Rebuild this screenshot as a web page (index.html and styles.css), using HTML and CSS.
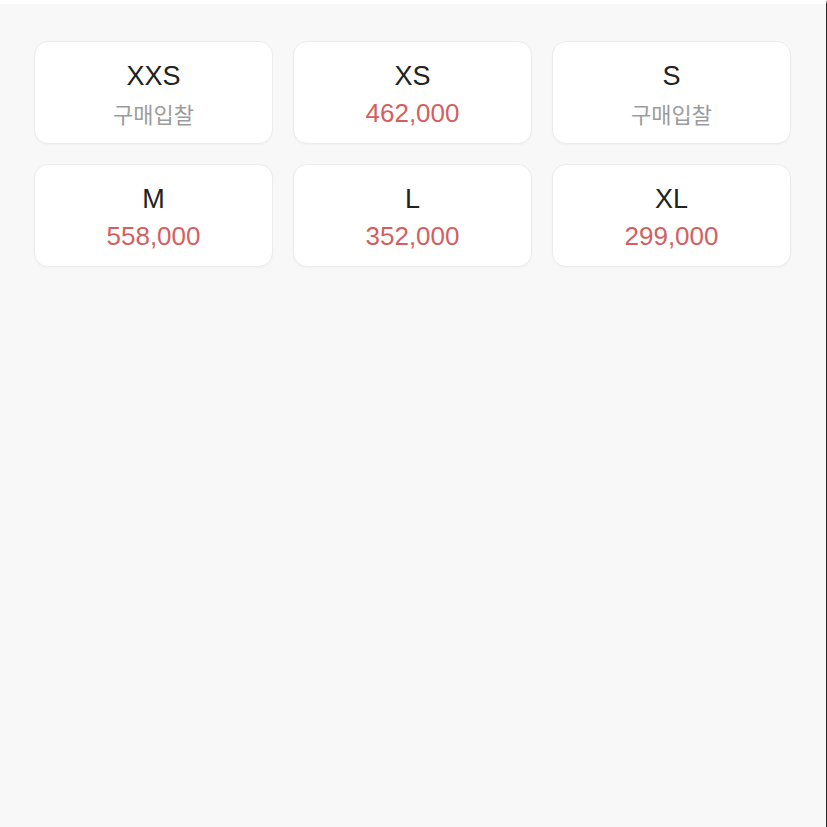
FILE: index.html
```html
<!DOCTYPE html>
<html lang="ko">
<head>
    <meta charset="utf-8">
    <title>사이즈 선택</title>
    <link rel="stylesheet" href="styles.css">
</head>
<body>
    <div class="page">
        <div class="sizes">
            <div class="size">
                <p class="name">XXS</p>
                <p class="bid">구매입찰</p>
            </div>
            <div class="size">
                <p class="name">XS</p>
                <p class="price">462,000</p>
            </div>
            <div class="size">
                <p class="name">S</p>
                <p class="bid">구매입찰</p>
            </div>
            <div class="size">
                <p class="name">M</p>
                <p class="price">558,000</p>
            </div>
            <div class="size">
                <p class="name">L</p>
                <p class="price">352,000</p>
            </div>
            <div class="size">
                <p class="name">XL</p>
                <p class="price">299,000</p>
            </div>
        </div>
    </div>
</body>
</html>
```

FILE: styles.css
```css
html, body{
    margin: 0;
    height: 100%;
}

body{
    background-color: #f8f8f8;
    font-family: "Liberation Sans", "Noto Sans CJK KR", sans-serif;
}

.page{
    height: 100%;
    box-sizing: border-box;
    border-top: 4px solid #fdfdfd;
    border-right: 1px solid #2a2a2a;
    padding: 37px 35px 0 34px;
}

.sizes{
    display: grid;
    grid-template-columns: repeat(3, 1fr);
    column-gap: 20px;
    row-gap: 20px;
}

.size{
    height: 103px;
    box-sizing: border-box;
    padding-top: 4px;
    display: flex;
    flex-direction: column;
    justify-content: center;
    align-items: center;
    background-color: #fff;
    border: 1px solid #ececec;
    border-radius: 14px;
    box-shadow: 0 1px 2px rgba(0, 0, 0, 0.03);
}

.size p{
    margin: 0;
    line-height: 37px;
}

.name{
    font-size: 27px;
    color: #222;
}

.bid{
    font-size: 22px;
    color: #9c9c9c;
    font-family: "Noto Sans CJK KR", sans-serif;
}

.price{
    font-size: 26px;
    color: #d45f60;
}
```
